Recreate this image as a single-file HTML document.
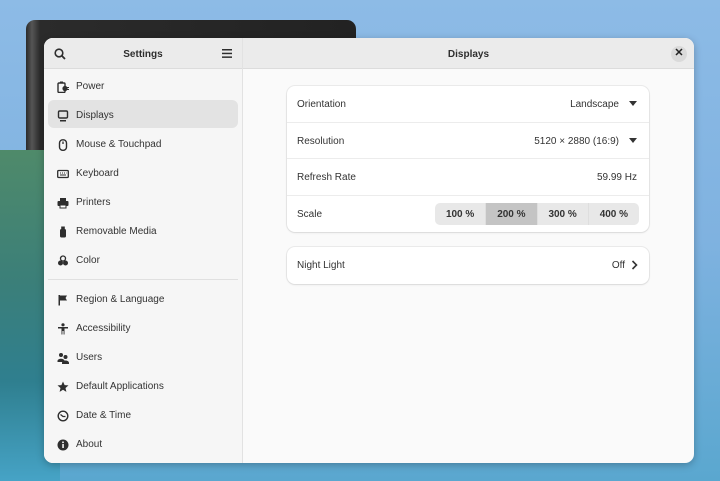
<!DOCTYPE html>
<html><head><meta charset="utf-8"><style>
*{box-sizing:border-box;margin:0;padding:0}
body{width:720px;height:481px;overflow:hidden;position:relative;font-family:"Liberation Sans",sans-serif;background:linear-gradient(180deg,#8dbbe6 0%,#7fb2e0 50%,#5aa7cf 100%);}
.bgwin{position:absolute;left:26px;top:20px;width:330px;height:215px;border-radius:9px;background:linear-gradient(90deg,#2a2a2a,#555 6px,#2b2b2b 14px,#222);}
.wave{position:absolute;left:0;top:150px;width:60px;height:331px;background:linear-gradient(180deg,#4f8a6a 0%,#3b7f79 40%,#2f7f8f 70%,#46a3c6 100%);}
.win{position:absolute;left:44px;top:38px;width:650px;height:425px;border-radius:9px;overflow:hidden;background:#fafafa;box-shadow:0 2px 8px rgba(0,0,0,.25);}
.side{position:absolute;left:0;top:0;width:199px;height:425px;background:#f6f6f6;border-right:1px solid #e2e2e2;}
.hdr{height:31px;background:#ebebeb;border-bottom:1px solid #dcdcdc;position:relative;font-size:10px;font-weight:bold;color:#2e2e2e;text-align:center;line-height:34px}
.item{position:absolute;left:4px;width:190px;height:28px;border-radius:6px;font-size:10px;color:#333;line-height:32px;padding-left:28px}
.item svg{position:absolute;left:9px;top:10px}
.sel{background:#e3e3e3}
.sep{position:absolute;left:4px;width:190px;top:241px;height:1px;background:#e0e0e0}
.main{position:absolute;left:199px;top:0;right:0;height:425px}
.card{position:absolute;left:44px;width:362px;background:#fff;border-radius:8px;box-shadow:0 0 0 1px rgba(0,0,0,.06),0 1px 2px rgba(0,0,0,.08)}
.row{height:36.5px;border-bottom:1px solid #ececec;position:relative;font-size:10px;color:#333;line-height:38px;padding-left:10px}
.row:last-child{border-bottom:none}
.val{position:absolute;right:12px;top:0}
.tri{display:inline-block;width:0;height:0;border-left:4px solid transparent;border-right:4px solid transparent;border-top:5px solid #333;margin-left:10px;vertical-align:1px}
.seg{position:absolute;right:10px;top:7px;height:22px;width:204px;display:flex;border-radius:5px;overflow:hidden;background:#e8e8e8}
.seg div{flex:1;text-align:center;line-height:23px;font-size:10px;font-weight:bold;color:#333;border-right:1px solid #dedede}
.seg div:last-child{border:none}
.seg .on{background:#c4c4c4}
</style></head><body>
<div class="bgwin"></div>
<div class="wave"></div>
<div class="win">
 <div class="side">
  <div class="hdr">Settings
   <svg style="position:absolute;left:10px;top:10px" width="12" height="12" viewBox="0 0 12 12"><circle cx="5" cy="5" r="3.8" fill="none" stroke="#2e2e2e" stroke-width="1.6"/><line x1="7.8" y1="7.8" x2="11" y2="11" stroke="#2e2e2e" stroke-width="1.8"/></svg>
   <svg style="position:absolute;left:178px;top:11px" width="10" height="9" viewBox="0 0 10 9"><rect y="0" width="10" height="1.5" fill="#2e2e2e"/><rect y="3.7" width="10" height="1.5" fill="#2e2e2e"/><rect y="7.4" width="10" height="1.5" fill="#2e2e2e"/></svg>
  </div>
  <div class="item" style="top:33px"><svg width="12" height="12" viewBox="0 0 12 12"><rect x="1" y="2" width="7" height="9.5" rx="1" fill="none" stroke="#2e2e2e" stroke-width="1.4"/><rect x="3" y="0.5" width="3" height="2" fill="#2e2e2e"/><circle cx="8" cy="7.5" r="2.6" fill="#2e2e2e"/><rect x="10" y="6" width="2" height="1" fill="#2e2e2e"/><rect x="10" y="8" width="2" height="1" fill="#2e2e2e"/></svg>Power</div>
  <div class="item sel" style="top:62px"><svg width="12" height="12" viewBox="0 0 12 12"><rect x="1.5" y="1" width="9" height="7" rx="1.2" fill="none" stroke="#2e2e2e" stroke-width="1.4"/><rect x="3" y="10" width="6" height="1.5" fill="#2e2e2e"/></svg>Displays</div>
  <div class="item" style="top:91px"><svg width="12" height="12" viewBox="0 0 12 12"><rect x="2.5" y="0.8" width="7" height="10.5" rx="3.2" fill="none" stroke="#2e2e2e" stroke-width="1.4"/><line x1="6" y1="2.5" x2="6" y2="5" stroke="#2e2e2e" stroke-width="1.3"/></svg>Mouse &amp; Touchpad</div>
  <div class="item" style="top:120px"><svg width="12" height="12" viewBox="0 0 12 12"><rect x="0.7" y="2.5" width="10.6" height="7" rx="1" fill="none" stroke="#2e2e2e" stroke-width="1.3"/><path d="M3 5h1M5 5h1M7 5h1M9 5h0.5M3 7h6" stroke="#2e2e2e" stroke-width="1"/></svg>Keyboard</div>
  <div class="item" style="top:149px"><svg width="12" height="12" viewBox="0 0 12 12"><rect x="3" y="1" width="6" height="3" fill="#2e2e2e"/><rect x="0.5" y="4" width="11" height="5" rx="1" fill="#2e2e2e"/><rect x="3" y="8" width="6" height="3" fill="#fff" stroke="#2e2e2e"/></svg>Printers</div>
  <div class="item" style="top:178px"><svg width="12" height="12" viewBox="0 0 12 12"><rect x="3" y="3" width="6" height="8.5" rx="1.5" fill="#2e2e2e"/><rect x="4.2" y="0.5" width="3.6" height="3" fill="#2e2e2e"/></svg>Removable Media</div>
  <div class="item" style="top:207px"><svg width="12" height="12" viewBox="0 0 12 12"><circle cx="6" cy="3.5" r="2.5" fill="none" stroke="#2e2e2e" stroke-width="1.3"/><circle cx="3.5" cy="8" r="2.5" fill="#2e2e2e"/><circle cx="8.5" cy="8" r="2.5" fill="#2e2e2e"/></svg>Color</div>
  <div class="sep"></div>
  <div class="item" style="top:246px"><svg width="12" height="12" viewBox="0 0 12 12"><rect x="1.5" y="1" width="1.5" height="10.5" fill="#2e2e2e"/><path d="M3 1.5h7l-1.5 2.5 1.5 2.5h-7z" fill="#2e2e2e"/></svg>Region &amp; Language</div>
  <div class="item" style="top:275px"><svg width="12" height="12" viewBox="0 0 12 12"><circle cx="6" cy="1.8" r="1.6" fill="#2e2e2e"/><path d="M1 4h10v1.5H7.5V11.5H6.6V8H5.4v3.5H4.5V5.5H1z" fill="#2e2e2e"/></svg>Accessibility</div>
  <div class="item" style="top:304px"><svg width="12" height="12" viewBox="0 0 12 12"><circle cx="4" cy="3" r="2" fill="#2e2e2e"/><path d="M0.5 9c0-3 7-3 7 0v1h-7z" fill="#2e2e2e"/><circle cx="8.5" cy="5" r="2" fill="#2e2e2e"/><path d="M5 11c0-3.3 7-3.3 7 0v1H5z" fill="#2e2e2e"/></svg>Users</div>
  <div class="item" style="top:333px"><svg width="12" height="12" viewBox="0 0 12 12"><path d="M6 0.5l1.6 3.6 3.9.3-3 2.6.9 3.9L6 8.8 2.6 10.9l.9-3.9-3-2.6 3.9-.3z" fill="#2e2e2e"/></svg>Default Applications</div>
  <div class="item" style="top:362px"><svg width="12" height="12" viewBox="0 0 12 12"><circle cx="6" cy="6" r="4.8" fill="none" stroke="#2e2e2e" stroke-width="1.4"/><path d="M3.5 4.5L6 6.5h2.5" fill="none" stroke="#2e2e2e" stroke-width="1.3"/></svg>Date &amp; Time</div>
  <div class="item" style="top:391px"><svg width="12" height="12" viewBox="0 0 12 12"><circle cx="6" cy="6" r="5.5" fill="#2e2e2e"/><rect x="5.3" y="5" width="1.5" height="4" fill="#fff"/><circle cx="6" cy="3.3" r="0.9" fill="#fff"/></svg>About</div>
 </div>
 <div class="main">
  <div class="hdr">Displays
   <div style="position:absolute;right:7px;top:8px;width:16px;height:16px;border-radius:50%;background:#dadada;line-height:15px;font-size:11px;color:#222">✕</div>
  </div>
  <div class="card" style="top:48px">
   <div class="row">Orientation<span class="val">Landscape<span class="tri"></span></span></div>
   <div class="row">Resolution<span class="val">5120 × 2880 (16:9)<span class="tri"></span></span></div>
   <div class="row">Refresh Rate<span class="val">59.99 Hz</span></div>
   <div class="row">Scale<div class="seg"><div>100 %</div><div class="on">200 %</div><div>300 %</div><div>400 %</div></div></div>
  </div>
  <div class="card" style="top:209px">
   <div class="row">Night Light<span class="val" style="right:24px">Off</span>
    <svg style="position:absolute;right:11px;top:13px" width="7" height="10" viewBox="0 0 7 10"><path d="M1.5 1l4 4-4 4" fill="none" stroke="#333" stroke-width="1.6"/></svg></div>
  </div>
 </div>
</div>
</body></html>
